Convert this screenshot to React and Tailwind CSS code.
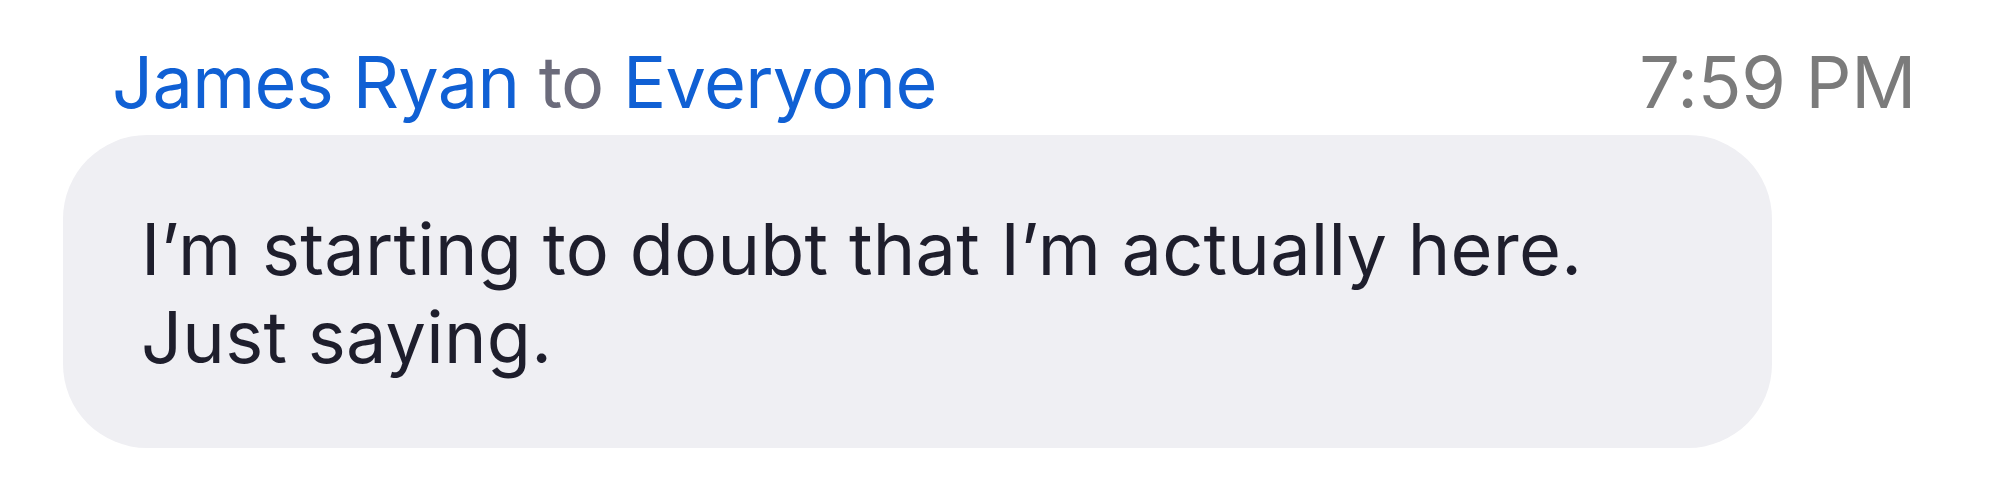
export default function App() {
  return (
    <div className="w-[2000px] h-[502px] bg-white" style={{ fontFamily: "Inter, 'Noto Sans', sans-serif" }}>
      <div className="flex items-baseline justify-between pl-[112px] pr-[84px] pt-[38px]">
        <div className="text-[72px] leading-[88px] tracking-[-0.7px]">
          <span className="text-[#1060d4]">James Ryan</span>
          <span className="text-[#6b6b7b]"> to </span>
          <span className="text-[#1060d4]">Everyone</span>
        </div>
        <div className="text-[72px] leading-[88px] text-[#7b7b7b] tracking-[-0.3px]">7:59 PM</div>
      </div>
      <div className="ml-[63px] mt-[9px] w-[1709px] h-[313px] rounded-[84px] bg-[#efeff3] pl-[78px] pt-[70px]">
        <p className="text-[72px] leading-[88px] text-[#1e1e2c] tracking-[0.25px]">
          I’m starting to doubt that I’m actually here.
          <br />
          Just saying.
        </p>
      </div>
    </div>
  );
}
